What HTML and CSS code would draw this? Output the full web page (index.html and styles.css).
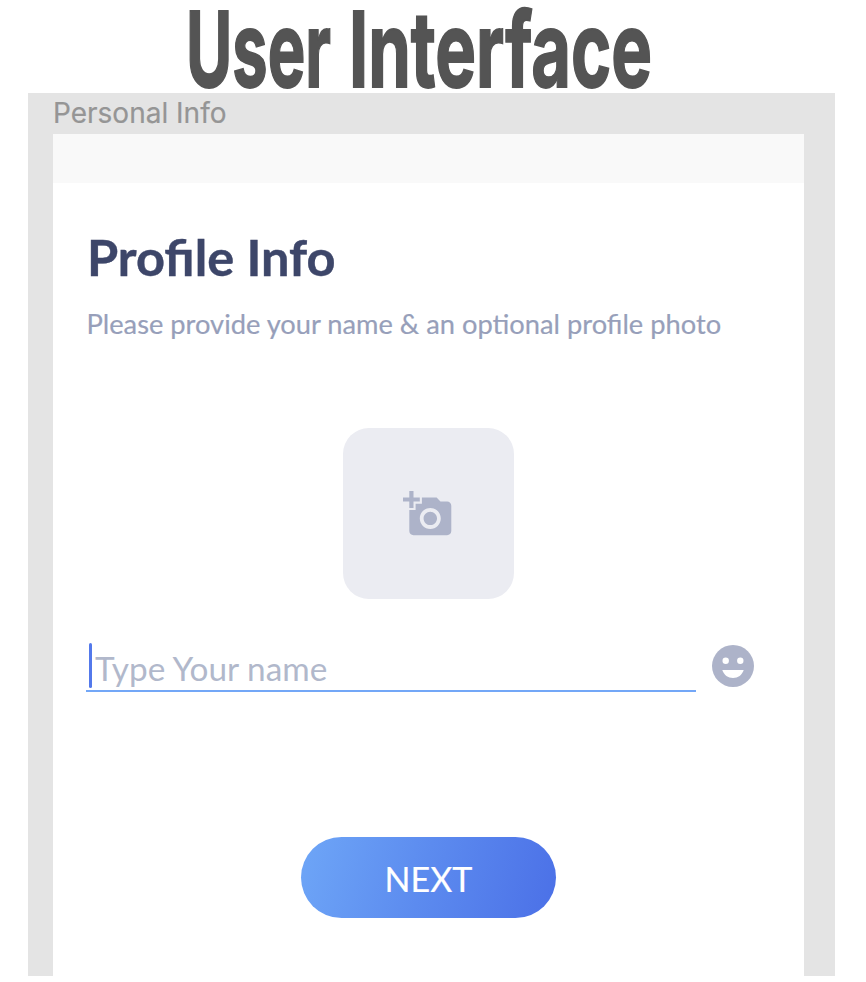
FILE: index.html
```html
<!DOCTYPE html>
<html lang="en">
<head>
<meta charset="utf-8">
<title>User Interface</title>
<link rel="stylesheet" href="styles.css">
</head>
<body>
<svg class="title" viewBox="0 0 866 93" role="heading" aria-level="1">
  <text x="186" y="87" textLength="145" lengthAdjust="spacingAndGlyphs">User</text>
  <text x="349" y="87" textLength="303" lengthAdjust="spacingAndGlyphs">Interface</text>
</svg>
<main class="canvas">
  <div class="frame-label">Personal Info</div>
  <section class="frame">
    <div class="status-bar"></div>
    <div class="content">
      <h2>Profile Info</h2>
      <p class="hint">Please provide your name &amp; an optional profile photo</p>
      <div class="photo">
        <svg class="camera" viewBox="0 0 24 24"><path fill-rule="evenodd" d="M3 4V1h2v3h3v2H5v3H3V6H0V4zM6 10V7h3V4h7l1.83 2H21c1.1 0 2 .9 2 2v12c0 1.1-.9 2-2 2H5c-1.1 0-2-.9-2-2V10zm7 9c2.76 0 5-2.24 5-5s-2.24-5-5-5-5 2.24-5 5 2.24 5 5 5zm-3.2-5c0 1.77 1.43 3.2 3.2 3.2s3.2-1.43 3.2-3.2-1.43-3.2-3.2-3.2-3.2 1.43-3.2 3.2z"/></svg>
      </div>
      <div class="name-row">
        <div class="field"><span class="caret"></span><span class="placeholder">Type Your name</span></div>
        <svg class="emoji" viewBox="0 0 42 42"><circle class="face" cx="21" cy="21" r="21"/><circle cx="13.7" cy="15.7" r="3.2"/><circle cx="28.3" cy="15.7" r="3.2"/><path d="M10.3 25h21.4c-1.6 5-5.7 8-10.7 8s-9.1-3-10.7-8z"/></svg>
      </div>
      <button class="next">NEXT</button>
    </div>
  </section>
</main>
</body>
</html>
```
FILE: styles.css
```css
body {
  margin: 0;
  width: 866px;
  height: 982px;
  overflow: hidden;
  background: #fff;
  font-family: Lato, "Liberation Sans", sans-serif;
}
.title {
  display: block;
  width: 866px;
  height: 93px;
  font: 650 105px Inter, sans-serif;
  fill: #545454;
  stroke: #545454;
  stroke-width: 1.8px;
}
.canvas {
  box-sizing: border-box;
  width: 807px;
  height: 883px;
  margin-left: 28.4px;
  padding: 0 31.6px 0 24.6px;
  background: #e4e4e4;
}
.frame-label {
  height: 41px;
  font: 400 28px/40px Inter, sans-serif;
  color: #959595;
  -webkit-text-stroke: 0.2px #959595;
  white-space: nowrap;
}
.frame {
  height: 842px;
  background: #fff;
}
.status-bar {
  height: 49px;
  background: #f9f9f9;
}
.content {
  display: flex;
  flex-direction: column;
  padding: 44px 49px 0 34px;
}
h2 {
  margin: 0;
  font-size: 50.5px;
  line-height: 60px;
  font-weight: 700;
  color: #3d4669;
  -webkit-text-stroke: 0.4px #3d4669;
  white-space: nowrap;
}
.hint {
  margin: 21px 0 0 -0.5px;
  font-size: 27.27px;
  line-height: 32px;
  color: #979fba;
  -webkit-text-stroke: 0.2px #979fba;
  white-space: nowrap;
}
.photo {
  display: flex;
  align-items: center;
  justify-content: center;
  width: 171px;
  height: 171px;
  margin: 88px 0 0 256px;
  border-radius: 26px;
  background: #ebecf2;
}
.camera {
  width: 50.4px;
  height: 50.4px;
  margin-top: 0.6px;
  fill: #adb3c9;
}
.name-row {
  display: flex;
  gap: 16px;
  margin: 44px 0 0 -1px;
}
.field {
  display: flex;
  box-sizing: border-box;
  width: 610px;
  height: 49px;
  border-bottom: 2.5px solid #73a7f7;
}
.caret {
  width: 3px;
  height: 45px;
  margin-left: 3px;
  border-radius: 2px;
  background: #5379eb;
}
.placeholder {
  margin-left: 3px;
  font-size: 33.35px;
  line-height: 50px;
  color: #b1b8cb;
  white-space: nowrap;
}
.emoji {
  width: 42px;
  height: 42px;
  margin-top: 2px;
  fill: #fff;
}
.face {
  fill: #adb3c9;
}
.next {
  width: 255px;
  height: 81px;
  margin: 145px 0 0 214px;
  padding: 2px 0 0;
  border: 0;
  border-radius: 41px;
  background: linear-gradient(105deg, #6ea6f7, #5c8bef 48%, #4b70e7);
  color: #fff;
  font: 400 34px Lato, sans-serif;
  -webkit-text-stroke: 0.2px #fff;
}
```
